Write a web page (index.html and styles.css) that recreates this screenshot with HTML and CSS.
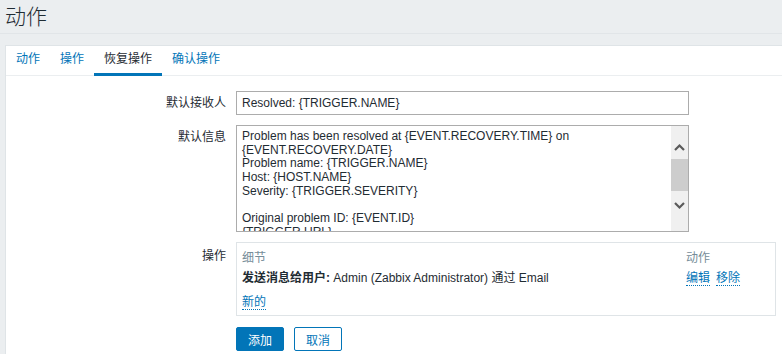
FILE: index.html
```html
<!DOCTYPE html>
<html>
<head>
  <title>动作</title>
  <meta charset='utf-8'>
  <link rel="stylesheet" href="styles.css">
</head>
<body>

<div class='header-title'><h1>动作</h1></div>

<div class='panel'>
  <ul class='tabs'>
    <li><a href='#'>动作</a></li>
    <li><a href='#'>操作</a></li>
    <li class='active'><a href='#'>恢复操作</a></li>
    <li><a href='#'>确认操作</a></li>
  </ul>

  <form class='form-grid'>
    <label class='form-label' for='subject'>默认接收人</label>
    <div><input class='text-input' id='subject' type='text' value='Resolved: {TRIGGER.NAME}'></div>

    <label class='form-label' for='message'>默认信息</label>
    <div class='textarea-box'>
      <textarea id='message' class='message' spellcheck='false'>Problem has been resolved at {EVENT.RECOVERY.TIME} on {EVENT.RECOVERY.DATE}
Problem name: {TRIGGER.NAME}
Host: {HOST.NAME}
Severity: {TRIGGER.SEVERITY}

Original problem ID: {EVENT.ID}
{TRIGGER.URL}</textarea>
      <div class='scrollbar'>
        <svg class='arrow up' width='17' height='17' viewBox='0 0 17 17'><path d='M4 11 L8.5 6.5 L13 11' fill='none' stroke='#5a5a5a' stroke-width='2.2'/></svg>
        <div class='thumb'></div>
        <svg class='arrow down' width='17' height='17' viewBox='0 0 17 17'><path d='M4 6 L8.5 10.5 L13 6' fill='none' stroke='#5a5a5a' stroke-width='2.2'/></svg>
      </div>
    </div>

    <label class='form-label ops-label'>操作</label>
    <div class='ops-box'>
      <div class='ops-head'>细节</div>
      <div class='ops-head'>动作</div>
      <div class='ops-cell'><b>发送消息给用户:</b> Admin (Zabbix Administrator) 通过 Email</div>
      <div class='ops-cell'><a class='link' href='#'>编辑</a><a class='link next' href='#'>移除</a></div>
      <div class='ops-new'><a class='link' href='#'>新的</a></div>
    </div>

    <div></div>
    <div class='buttons'>
      <button type='button' class='btn'>添加</button>
      <button type='button' class='btn btn-alt'>取消</button>
    </div>
  </form>
</div>

</body>
</html>
```

FILE: styles.css
```css
body {
  margin:0;
  padding:0;
  background:#ebeef0;
  color:#1f2c33;
  font-family:"Liberation Sans", Arial, "Noto Sans CJK SC", sans-serif;
  font-size:12px;
}

a {
  color:#0275b8;
  text-decoration:none;
}

.header-title {
  height:33px;
  padding:0 5px;
  border-bottom:1px solid #e1e5e8;
  margin-bottom:11px;
}

.header-title h1 {
  margin:0;
  font-size:21px;
  font-weight:300;
  line-height:33px;
}

.panel {
  margin-left:5px;
  height:320px;
  background:#fff;
  border:1px solid #dfe4e7;
  border-right:0;
}

/* tabs */
.tabs {
  display:flex;
  margin:0;
  padding:0;
  list-style:none;
  border-bottom:1px solid #ebeef0;
}

.tabs li {
  margin-bottom:-1px;
  border-bottom:3px solid transparent;
}

.tabs li a {
  display:block;
  padding:0 10px;
  line-height:27px;
}

.tabs li.active {
  border-bottom-color:#0275b8;
}

.tabs li.active a {
  color:#1f2c33;
}

/* form */
.form-grid {
  display:grid;
  grid-template-columns:220px auto;
  column-gap:10px;
  row-gap:10px;
  padding-top:15px;
}

.form-label {
  text-align:right;
  line-height:24px;
}

.ops-label {
  padding-top:2px;
}

.text-input {
  box-sizing:border-box;
  width:453px;
  height:24px;
  margin:0;
  padding:0 5px;
  border:1px solid #acacac;
  font:inherit;
  color:#1f2c33;
  outline:0;
}

.textarea-box {
  box-sizing:border-box;
  display:flex;
  width:453px;
  height:107px;
  border:1px solid #acacac;
}

.message {
  flex:1;
  margin:0;
  padding:4px 5px;
  border:0;
  resize:none;
  overflow:hidden;
  font:inherit;
  line-height:13.7px;
  color:#1f2c33;
  outline:0;
}

.scrollbar {
  display:flex;
  flex-direction:column;
  width:17px;
  background:#f0f0f0;
}

.scrollbar .arrow {
  display:block;
}

.scrollbar .up {
  margin-top:13px;
}

.scrollbar .thumb {
  height:32px;
  margin:3px 0 6px;
  background:#cdcdcd;
}

/* operations list */
.ops-box {
  display:grid;
  grid-template-columns:444px 1fr;
  width:538px;
  border:1px solid #dfe4e7;
}

.ops-head {
  padding:8px 5px 4px;
  line-height:14px;
  color:#768d99;
}

.ops-cell {
  padding:2px 5px;
  line-height:14px;
}

.ops-new {
  grid-column:1 / 3;
  padding:8px 5px 6px;
  line-height:14px;
}

.link {
  border-bottom:1px dotted #0275b8;
}

.link.next {
  margin-left:6px;
}

/* buttons */
.buttons {
  display:flex;
  gap:10px;
  padding-top:1px;
}

.btn {
  box-sizing:border-box;
  height:24px;
  padding:0 11px;
  border:1px solid #0275b8;
  border-radius:2px;
  background:#0275b8;
  color:#fff;
  font:inherit;
  cursor:pointer;
}

.btn-alt {
  background:#fff;
  color:#0275b8;
}
```
